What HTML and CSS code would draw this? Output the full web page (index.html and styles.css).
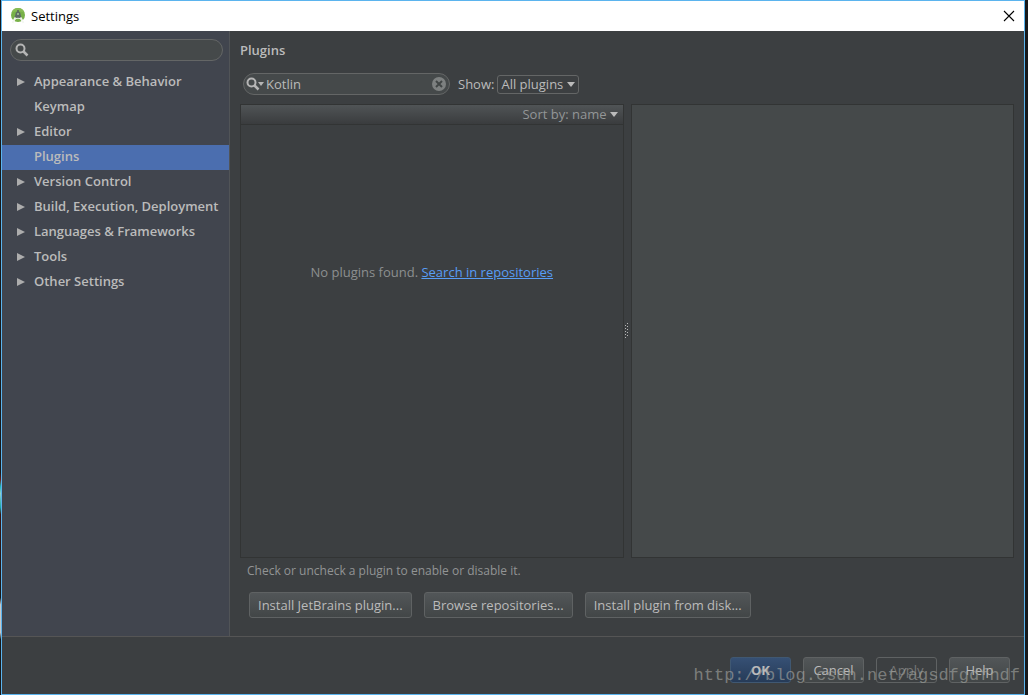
FILE: index.html
```html
<!DOCTYPE html>
<html lang="en">
<head>
<meta charset="utf-8">
<title>Settings</title>
<link rel="stylesheet" href="styles.css">
</head>
<body>
<div class="window">
  <header class="titlebar">
    <svg class="app-icon" width="16" height="16" viewBox="0 0 16 16" aria-hidden="true">
      <circle cx="8" cy="7" r="7" fill="#78b148"/>
      <path d="M1.500 4.500A7 7 0 0 1 14.500 4.500L8 3z" fill="#86bb54"/>
      <path d="M8 2v2" stroke="#56615a" stroke-width="1.500"/>
      <path d="M8 3.500a2.500 2.500 0 0 1 2.500 2.500l1 4h-7l1-4A2.500 2.500 0 0 1 8 3.500z" fill="#5d6b62"/>
      <circle cx="8" cy="6" r="1" fill="#a9c79a"/>
      <path d="M5.500 9.500L2.500 15M10.500 9.500l3 5.500" stroke="#f4f7f2" stroke-width="1.800"/>
      <path d="M4 11.500q4 -2.500 8 0" stroke="#e6efe0" stroke-width="1.200" fill="none"/>
    </svg>
    <h1 class="title">Settings</h1>
    <button class="close" type="button" aria-label="Close">
      <svg width="12" height="12" viewBox="0 0 12 12"><path d="M1 1l10 10M11 1L1 11" stroke="#000" stroke-width="1.100"/></svg>
    </button>
  </header>
  <div class="body">
    <nav class="sidebar" aria-label="Settings categories">
      <label class="search">
        <svg class="lens" width="14" height="14" viewBox="0 0 14 14"><circle cx="5.500" cy="5.500" r="4" fill="none" stroke="#b5b5b5" stroke-width="2"/><path d="M8.500 8.500l4 4" stroke="#b5b5b5" stroke-width="2.500"/></svg>
        <input class="search-input" type="text" aria-label="Search settings">
      </label>
      <ul class="tree">
        <li><a class="node parent" href="#">Appearance &amp; Behavior</a></li>
        <li><a class="node" href="#">Keymap</a></li>
        <li><a class="node parent" href="#">Editor</a></li>
        <li><a class="node selected" href="#" aria-current="page">Plugins</a></li>
        <li><a class="node parent" href="#">Version Control</a></li>
        <li><a class="node parent" href="#">Build, Execution, Deployment</a></li>
        <li><a class="node parent" href="#">Languages &amp; Frameworks</a></li>
        <li><a class="node parent" href="#">Tools</a></li>
        <li><a class="node parent" href="#">Other Settings</a></li>
      </ul>
    </nav>
    <main class="main">
      <h2 class="heading">Plugins</h2>
      <div class="toolbar">
        <label class="search filter">
          <svg class="lens" width="19" height="14" viewBox="0 0 19 14"><circle cx="5.500" cy="5.500" r="4" fill="none" stroke="#b5b5b5" stroke-width="2"/><path d="M8.500 8.500l4 4" stroke="#b5b5b5" stroke-width="2.500"/><path d="M12 5h6l-3 4z" fill="#b5b5b5"/></svg>
          <input class="search-input" type="text" value="Kotlin" aria-label="Filter plugins">
          <button class="clear" type="button" aria-label="Clear">
            <svg width="14" height="14" viewBox="0 0 14 14"><circle cx="7" cy="7" r="7" fill="#7d8080"/><path d="M4 4l6 6M10 4l-6 6" stroke="#414545" stroke-width="2"/></svg>
          </button>
        </label>
        <label class="show-label" for="show">Show:</label>
        <span class="combo"><select id="show" class="select"><option>All plugins</option></select></span>
      </div>
      <div class="panes">
        <section class="list" aria-label="Plugin list">
          <div class="list-head"><button class="sort" type="button">Sort by: name</button></div>
          <p class="empty">No plugins found. <a class="link" href="#">Search in repositories</a></p>
        </section>
        <div class="splitter">
          <svg width="4" height="16" viewBox="0 0 4 16" fill="#b8b8b8"><path d="M2 0h1v1H2zM0 2h1v1H0zM2 3h1v1H2zM0 5h1v1H0zM2 6h1v1H2zM0 8h1v1H0zM2 9h1v1H2zM0 11h1v1H0zM2 12h1v1H2zM0 14h1v1H0z"/></svg>
        </div>
        <section class="details" aria-label="Plugin details"></section>
      </div>
      <p class="hint">Check or uncheck a plugin to enable or disable it.</p>
      <div class="actions">
        <button class="btn" type="button">Install JetBrains plugin...</button>
        <button class="btn" type="button">Browse repositories...</button>
        <button class="btn" type="button">Install plugin from disk...</button>
      </div>
    </main>
  </div>
  <footer class="footer">
    <button class="btn dialog-btn primary" type="button">OK</button>
    <button class="btn dialog-btn" type="button">Cancel</button>
    <button class="btn dialog-btn" type="button" disabled>Apply</button>
    <button class="btn dialog-btn" type="button">Help</button>
  </footer>
  <span class="watermark">http://blog.csdn.net/agsdfgdfhdf</span>
</div>
</body>
</html>
```
FILE: styles.css
```css
* { box-sizing: border-box; }
body {
  margin: 0;
  padding: 0 3px 0 1px;
  height: 100vh;
  font: 13px/18px "Open Sans", "Noto Sans", sans-serif;
  color: #bbbbbb;
  background: linear-gradient(#17191b 68%, #6b1c18 69%, #19b5b5 70%, #8fd0cc 71%, #19a5a5 73%, #3a1512 74%, #17191b 86%, #c8c8c8 87%, #c8c8c8 91%, #17191b 92%) left / 1px 100% no-repeat #17191b;
}
h1, h2, p, ul { margin: 0; padding: 0; font-weight: normal; }
button, input, select { font: inherit; color: inherit; border: 0; background: none; padding: 0; margin: 0; outline: 0; }
svg { display: block; flex: none; }
.window {
  position: relative;
  display: flex;
  flex-direction: column;
  height: 100%;
  border: 1px solid #5bb4ee;
  background: #3c3f41;
}
.titlebar {
  display: flex;
  align-items: center;
  height: 30px;
  flex: none;
  padding: 0 9px 1px 8px;
  gap: 5px;
  background: #fff;
  color: #000;
}
.title { flex: 1; font-size: 13px; }
.body { display: flex; flex: 1; min-height: 0; }
.sidebar {
  width: 228px;
  flex: none;
  padding-top: 8px;
  background: #41454e;
  border-right: 1px solid #515457;
}
.search {
  display: flex;
  align-items: center;
  height: 22px;
  padding: 0 4px;
  border: 1px solid #646666;
  border-radius: 11px;
  background: #45494a;
}
.sidebar .search { margin: 0 6px 9px 8px; }
.search-input { flex: 1; min-width: 0; padding: 0 2px; }
.tree { list-style: none; }
.node {
  display: block;
  position: relative;
  padding: 0 0 2px 32px;
  line-height: 23px;
  font-weight: 600;
  color: #bbbbbb;
  text-decoration: none;
}
.parent::before {
  content: "";
  position: absolute;
  left: 15px;
  top: 8px;
  border: solid transparent;
  border-width: 4px 0 4px 8px;
  border-left-color: #adadad;
}
.selected { background: #4b6eaf; }
.main {
  display: flex;
  flex-direction: column;
  flex: 1;
  min-width: 0;
  padding: 10px 10px 18px;
}
.heading { font-size: 13px; font-weight: 600; }
.toolbar { display: flex; align-items: center; margin: 14px 0 9px 3px; }
.filter { width: 207px; padding: 0 3px 0 2px; }
.filter .search-input { padding-left: 1px; }
.clear { flex: none; }
.show-label { margin: 0 3px 0 8px; }
.combo { position: relative; }
.select {
  display: block;
  appearance: none;
  width: 82px;
  height: 19px;
  padding-left: 3px;
  line-height: 17px;
  border: 1px solid #646666;
  border-radius: 3px;
  background: #3c3f41;
}
.combo::after, .sort::after {
  content: "";
  border: solid transparent;
  border-width: 5px 4px 0;
  border-top-color: #bbbbbb;
}
.combo::after { position: absolute; right: 4px; top: 7px; pointer-events: none; }
.panes { display: grid; grid-template-columns: 1fr 7px 1fr; flex: 1; }
.list, .details { border: 1px solid #323434; }
.details { background: #45494a; }
.list-head {
  display: flex;
  justify-content: flex-end;
  height: 20px;
  padding: 0 5px 1px 0;
  background: linear-gradient(#505456, #3a3c3e);
  border-bottom: 1px solid #323434;
}
.sort { display: flex; align-items: center; gap: 3px; color: #939697; }
.empty { margin-top: 138px; text-align: center; color: #8c8f90; }
.link { color: #589df6; }
.splitter { display: flex; align-items: center; justify-content: center; }
.hint { margin: 4px 7px 12px; font-size: 12px; color: #929495; }
.actions { display: flex; gap: 12px; padding-left: 9px; }
.btn {
  height: 26px;
  padding: 0 8px;
  border: 1px solid #5f6263;
  border-radius: 3px;
  background: linear-gradient(#525658, #424647);
  white-space: nowrap;
}
.footer {
  display: flex;
  justify-content: flex-end;
  gap: 12px;
  flex: none;
  padding: 20px 14px 11px;
  border-top: 1px solid #555555;
}
.dialog-btn { width: 61px; padding: 0; }
.primary { font-weight: bold; background: linear-gradient(#365074, #263b58); border-color: #405872; }
.btn:disabled { background: none; color: #777777; }
.watermark {
  position: absolute;
  right: 4px;
  bottom: 7px;
  font: 17px/22px "Liberation Mono", monospace;
  color: rgba(160, 162, 158, 0.65);
  pointer-events: none;
}
```
